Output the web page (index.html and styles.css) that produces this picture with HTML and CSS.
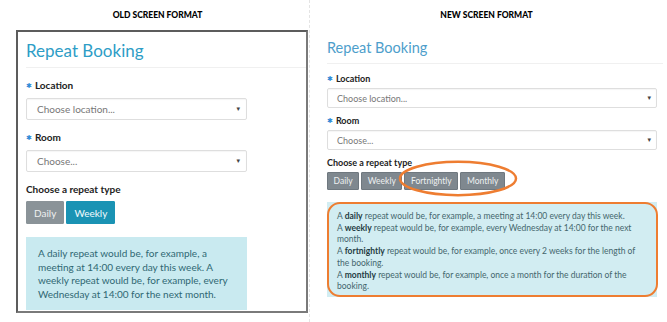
FILE: index.html
```html
<!DOCTYPE html>
<html>

<head>
    <meta charset="utf-8" />
    <title>Repeat Booking - screen formats</title>
    <link rel="stylesheet" href="styles.css">
</head>

<body>
    <div class="sheet">

        <div class="shot old">
            <h2 class="caption">OLD SCREEN FORMAT</h2>
            <div class="frame">
                <h1 class="title">Repeat Booking</h1>
                <div class="rule"></div>
                <div class="form">
                    <label class="field"><span class="req">✱</span>Location</label>
                    <div class="select">Choose location...<span class="caret">▾</span></div>
                    <label class="field"><span class="req">✱</span>Room</label>
                    <div class="select">Choose...<span class="caret">▾</span></div>
                    <label class="field">Choose a repeat type</label>
                    <div class="buttons">
                        <button class="btn">Daily</button><button class="btn active">Weekly</button>
                    </div>
                    <div class="info">
                        A daily repeat would be, for example, a meeting at 14:00 every day this week. A weekly
                        repeat would be, for example, every Wednesday at 14:00 for the next month.
                    </div>
                </div>
            </div>
        </div>

        <div class="shot new">
            <h2 class="caption">NEW SCREEN FORMAT</h2>
            <div class="page">
                <h1 class="title">Repeat Booking</h1>
                <div class="rule"></div>
                <div class="form">
                    <label class="field"><span class="req">✱</span>Location</label>
                    <div class="select">Choose location...<span class="caret">▾</span></div>
                    <label class="field"><span class="req">✱</span>Room</label>
                    <div class="select">Choose...<span class="caret">▾</span></div>
                    <label class="field">Choose a repeat type</label>
                    <div class="buttons">
                        <button class="btn">Daily</button><button class="btn">Weekly</button><button
                            class="btn">Fortnightly</button><button class="btn">Monthly</button>
                        <svg class="ring" viewBox="0 0 120 40" preserveAspectRatio="none">
                            <ellipse cx="60" cy="20" rx="58" ry="18" />
                        </svg>
                    </div>
                    <div class="info">
                        <p>A <b>daily</b> repeat would be, for example, a meeting at 14:00 every day this week.</p>
                        <p>A <b>weekly</b> repeat would be, for example, every Wednesday at 14:00 for the next month.</p>
                        <p>A <b>fortnightly</b> repeat would be, for example, once every 2 weeks for the length of the booking.</p>
                        <p>A <b>monthly</b> repeat would be, for example, once a month for the duration of the booking.</p>
                    </div>
                </div>
            </div>
        </div>

    </div>
</body>

</html>
```

FILE: styles.css
```css
body {
    margin: 0;
    background-color: white;
    font-family: Lato, "Open Sans", sans-serif;
    color: #222;
}

.sheet {
    display: flex;
    width: 667px;
    height: 322px;
    overflow: hidden;
}

.caption {
    height: 30px;
    margin: 0;
    display: flex;
    align-items: center;
    justify-content: center;
    font-size: 8.5px;
    font-weight: 900;
    color: black;
}

/* old format */

.old {
    width: 310px;
    flex: none;
    border-right: 1px dashed #e4e4e4;
    box-sizing: border-box;
}

.old .caption {
    padding-left: 6px;
}

.old .frame {
    margin-left: 16px;
    width: 292px;
    height: 283px;
    box-sizing: border-box;
    border: 2px solid #7a7a7a;
    border-top-color: #5c5c5c;
    border-left-color: #5c5c5c;
    padding: 9px 0 0 8px;
}

.old .title {
    margin: 0;
    font-size: 17px;
    line-height: 20px;
    font-weight: 400;
    color: #2e9dc6;
}

.old .rule {
    height: 1px;
    margin-top: 6px;
    background-color: #f0f0f0;
}

.old .form {
    width: 221px;
    display: flex;
    flex-direction: column;
}

.old .field {
    font-size: 10px;
    line-height: 14px;
    font-weight: 700;
    margin: 10px 0 5px;
}

.old .select {
    height: 22px;
    font-size: 10px;
    padding: 0 6px 0 10px;
}

.old .btn {
    height: 23px;
    font-size: 10px;
    padding: 0 7px;
    margin-right: 2px;
}

.old .btn.active {
    background-color: #1a93b4;
    border-color: #1a93b4;
    color: #f4fbfd;
}

.old .info {
    margin-top: 13px;
    height: 73px;
    box-sizing: border-box;
    padding: 10px 12px 0 12px;
    background-color: #c9eaf0;
    color: #2f6873;
    font-size: 10px;
    line-height: 13.5px;
}

/* new format */

.new {
    flex: 1;
}

.new .caption {
    padding-right: 4px;
}

.new .page {
    padding: 9px 4px 0 17px;
}

.new .title {
    margin: 0;
    font-size: 14.5px;
    line-height: 18px;
    font-weight: 400;
    color: #4d9ecb;
}

.new .rule {
    height: 1px;
    margin-top: 6px;
    background-color: #f0f0f0;
}

.new .form {
    width: 330px;
    display: flex;
    flex-direction: column;
}

.new .field {
    font-size: 9px;
    line-height: 12px;
    font-weight: 700;
    margin: 7px 0 3px;
}

.new .form .field:first-child {
    margin-top: 9px;
}

.new .select {
    height: 20px;
    font-size: 9px;
    padding: 0 5px 0 9px;
}

.new .btn {
    height: 18px;
    font-size: 8.5px;
    padding: 0 5.6px;
    margin-right: 2px;
}

.new .info {
    position: relative;
    margin-top: 12px;
    height: 95px;
    box-sizing: border-box;
    padding: 9px 14px 0 10px;
    background-color: #d2edf2;
    color: #44666d;
    font-size: 8.5px;
    line-height: 11.7px;
}

.new .info::after {
    content: "";
    position: absolute;
    inset: 0 -1px 0 0;
    border: 2.5px solid #ee7d31;
    border-radius: 13px;
}

.new .info p {
    margin: 0;
}

.new .info b {
    color: #1f3c43;
}

/* shared parts */

.req {
    color: #2f8ad6;
    font-size: 7px;
    margin-right: 3px;
    vertical-align: 1px;
    font-family: "DejaVu Sans", sans-serif;
}

.select {
    display: flex;
    align-items: center;
    justify-content: space-between;
    box-sizing: border-box;
    border: 1px solid #dedede;
    border-radius: 2px;
    background-color: white;
    box-shadow: inset 0 1px 1px rgba(0, 0, 0, 0.04);
    color: #777;
}

.caret {
    font-size: 7px;
    color: #444;
    font-family: "DejaVu Sans", sans-serif;
}

.buttons {
    position: relative;
    display: flex;
}

.btn {
    box-sizing: border-box;
    font-family: Lato, "Open Sans", sans-serif;
    background-color: #7f888f;
    border: 1px solid #6f787f;
    border-radius: 1px;
    color: #eef0f1;
}

.old .btn:first-child {
    background-color: #8a9398;
    border-color: #8a9398;
}

.ring {
    position: absolute;
    left: 71px;
    top: -12px;
    width: 120px;
    height: 37px;
    overflow: visible;
}

.ring ellipse {
    fill: none;
    stroke: #ee7d31;
    stroke-width: 2.5px;
    vector-effect: non-scaling-stroke;
}
```
